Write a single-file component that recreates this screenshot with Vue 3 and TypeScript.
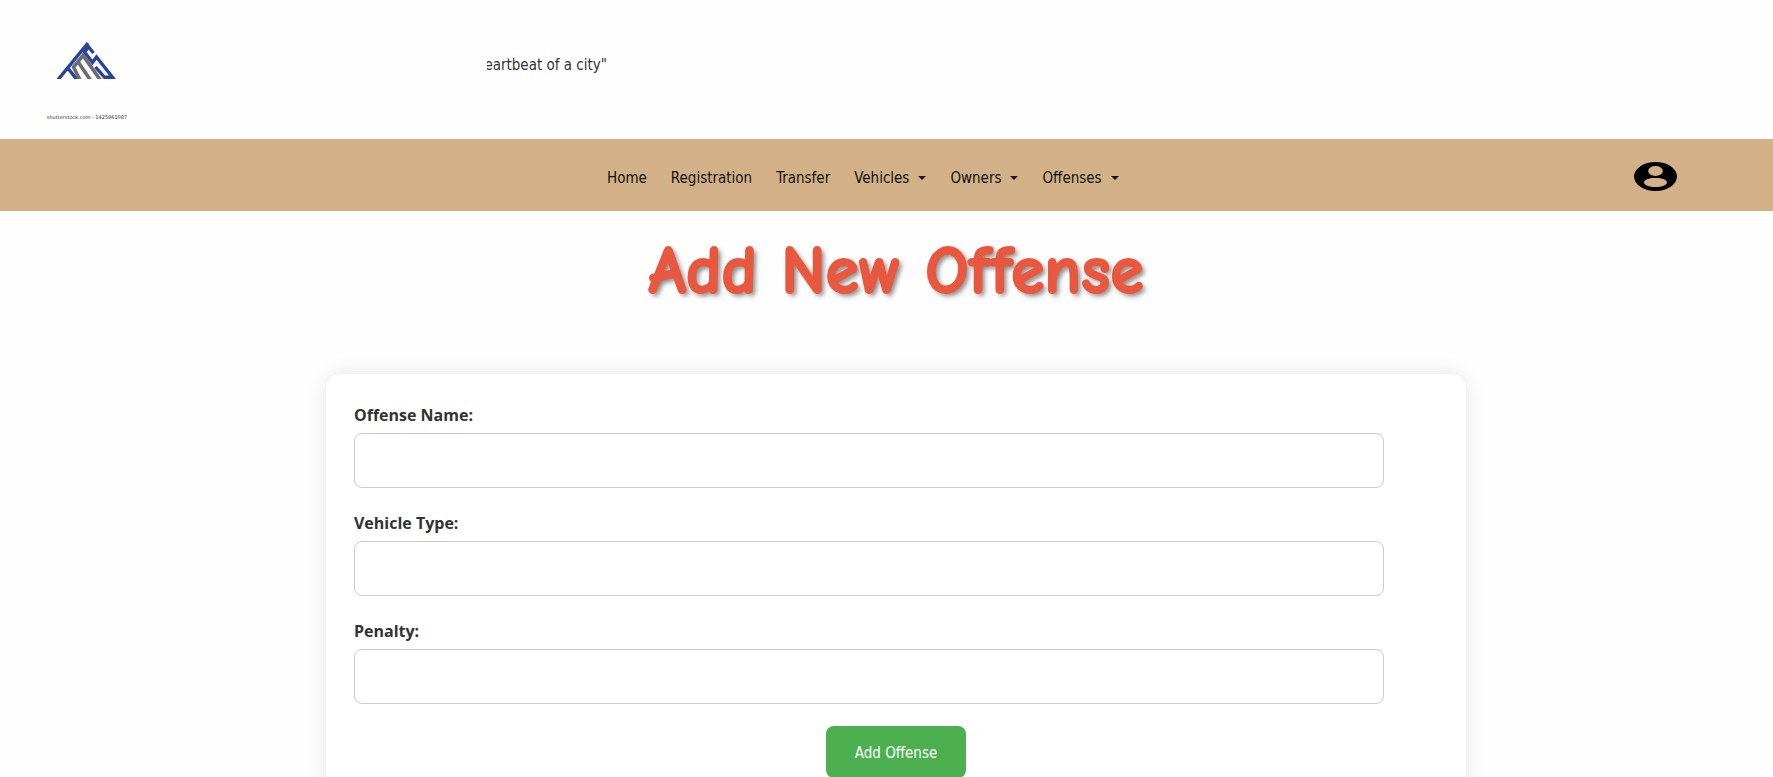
<script setup lang="ts">
import { reactive } from 'vue'

interface NavItem {
  label: string
  menu: boolean
}

interface Field {
  id: 'name' | 'vehicleType' | 'penalty'
  label: string
}

const navItems: NavItem[] = [
  { label: 'Home', menu: false },
  { label: 'Registration', menu: false },
  { label: 'Transfer', menu: false },
  { label: 'Vehicles', menu: true },
  { label: 'Owners', menu: true },
  { label: 'Offenses', menu: true },
]

const fields: Field[] = [
  { id: 'name', label: 'Offense Name:' },
  { id: 'vehicleType', label: 'Vehicle Type:' },
  { id: 'penalty', label: 'Penalty:' },
]

const offense = reactive({ name: '', vehicleType: '', penalty: '' })
</script>

<template>
  <div class="page">
    <header class="top">
      <a class="brand" href="#" aria-label="Home page">
        <svg class="mark" viewBox="0 0 60 38" aria-hidden="true">
          <g fill="none" stroke-width="3.4">
            <path stroke="#27449b" d="M0 40 L31 2 M10 26 L21 40" />
            <path stroke="#27449b" d="M36.5 12 L31.5 6 L27.5 11 L35.5 21.5 L39.5 16 L55.5 36.3 H47.5 L38.5 26" />
            <path stroke="#6d6d6d" stroke-width="3.6" d="M23.5 40 L16.5 26 L26 14.5 L44 40 M20.5 20 L34 40" />
          </g>
        </svg>
        <span class="credit">shutterstock.com - 1425961087</span>
      </a>
      <div class="ticker"><span>"Heartbeat of a city"</span></div>
    </header>

    <nav class="bar">
      <ul class="links">
        <li v-for="item in navItems" :key="item.label">
          <button v-if="item.menu" type="button" class="link" aria-haspopup="true">
            {{ item.label }}<span class="caret"></span>
          </button>
          <a v-else class="link" href="#">{{ item.label }}</a>
        </li>
      </ul>
      <button type="button" class="account" aria-label="Account">
        <svg viewBox="0 0 43 29" aria-hidden="true">
          <path
            fill="#000"
            fill-rule="evenodd"
            d="M21.5 0A21.5 14.5 0 1 1 21.5 29A21.5 14.5 0 1 1 21.5 0Z M21.5 4A7.3 5 0 1 0 21.5 14A7.3 5 0 1 0 21.5 4Z M21.5 16C14 16 10 18 10 20.5C10 23 15 25 21.5 25C28 25 33 23 33 20.5C33 18 29 16 21.5 16Z"
          />
        </svg>
      </button>
    </nav>

    <main class="content">
      <h1>Add New Offense</h1>
      <form class="card" @submit.prevent>
        <div v-for="field in fields" :key="field.id" class="field">
          <label :for="field.id">{{ field.label }}</label>
          <input :id="field.id" v-model="offense[field.id]" type="text" />
        </div>
        <button type="submit" class="submit">Add Offense</button>
      </form>
    </main>
  </div>
</template>

<style>
body {
  margin: 0;
  background: #fefefe;
}
</style>

<style scoped>
.page {
  font-family: "DejaVu Sans Condensed", "DejaVu Sans", sans-serif;
  font-size: 15px;
  line-height: 24px;
  color: #333;
}

.top {
  display: flex;
  align-items: center;
  height: 139px;
}

.brand {
  display: flex;
  flex-direction: column;
  align-items: center;
  gap: 35px;
  box-sizing: border-box;
  width: 174px;
  height: 100%;
  padding-top: 41px;
  color: #333;
  text-decoration: none;
}

.mark {
  width: 60px;
  height: 38px;
}

.credit {
  font-family: "DejaVu Sans", sans-serif;
  font-size: 5px;
  line-height: 6px;
  white-space: nowrap;
}

.ticker {
  display: flex;
  justify-content: flex-end;
  width: 120px;
  margin: 0 0 10px 313px;
  overflow: hidden;
  white-space: nowrap;
}

.bar {
  display: flex;
  align-items: center;
  height: 72px;
  padding: 0 96px 0 595px;
  background: #d3b188;
}

.links {
  display: flex;
  flex: 1;
  margin: 0;
  padding: 6px 0 0;
  list-style: none;
}

.link {
  display: flex;
  align-items: center;
  padding: 0 12px;
  border: 0;
  background: none;
  color: #111;
  font: inherit;
  text-decoration: none;
  cursor: pointer;
}

.caret {
  margin-left: 9px;
  border: 4px solid transparent;
  border-top-color: #111;
  border-bottom: 0;
}

.account {
  display: flex;
  padding: 2px 0 0;
  border: 0;
  background: none;
  cursor: pointer;
}

.account svg {
  width: 43px;
  height: 29px;
}

.content {
  display: flex;
  flex-direction: column;
  align-items: center;
  padding: 20px 0 40px 19px;
}

h1 {
  margin: 0 0 63px;
  font-family: "Comic Neue", "Comic Sans MS", sans-serif;
  font-size: 68px;
  font-weight: 700;
  font-variant-ligatures: none;
  line-height: 80px;
  color: #e9573f;
  -webkit-text-stroke: 2px #e9573f;
  text-shadow: 3px 3px 5px rgba(0, 0, 0, 0.5);
}

.card {
  display: flex;
  flex-direction: column;
  gap: 22px;
  box-sizing: border-box;
  width: 65%;
  padding: 28px;
  border-radius: 15px;
  background: #fff;
  box-shadow: 0 0 20px rgba(0, 0, 0, 0.1);
}

.field {
  display: flex;
  flex-direction: column;
  gap: 5px;
}

label {
  font-family: "Open Sans", sans-serif;
  font-size: 16px;
  font-weight: 700;
  line-height: 26px;
}

input {
  box-sizing: border-box;
  width: 95%;
  height: 55px;
  padding: 0 14px;
  border: 1px solid #ccc;
  border-radius: 8px;
  background: #fff;
  font: inherit;
}

.submit {
  align-self: center;
  height: 52px;
  padding: 2px 29px 0;
  border: 0;
  border-radius: 8px;
  background: #4caf50;
  color: #fff;
  font: inherit;
  cursor: pointer;
}
</style>
